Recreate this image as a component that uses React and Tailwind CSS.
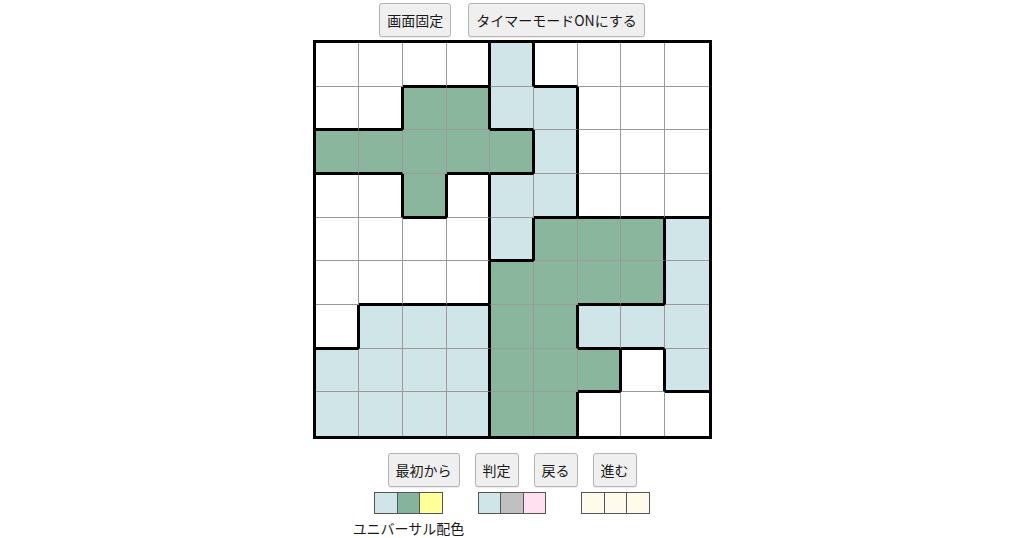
import React from "react";

const REGIONS = [
  "AAAABCCCC",
  "AAXXBBCCC",
  "XXXXXBCCC",
  "DDXDBBCCC",
  "DDDDBGGGF",
  "DDDDGGGGF",
  "DEEEGGFFF",
  "EEEEGGGHF",
  "EEEEGGHHH",
];

const COLORS = [
  "WWWWLWWWW",
  "WWGGLLWWW",
  "GGGGGLWWW",
  "WWGWLLWWW",
  "WWWWLGGGL",
  "WWWWGGGGL",
  "WLLLGGLLL",
  "LLLLGGGWL",
  "LLLLGGWWW",
];

function cellClass(r, c) {
  const reg = REGIONS[r][c];
  const col = COLORS[r][c];
  const cls = ["box-border"];
  if (col === "W") cls.push("bg-white");
  else if (col === "L") cls.push("bg-[#cfe5e8]");
  else cls.push("bg-[#8ab69e]");
  if (c < 8) {
    if (REGIONS[r][c + 1] !== reg) cls.push("border-r-2 border-r-black");
    else cls.push("border-r border-r-[#9a9a9a]");
  }
  if (c > 0 && REGIONS[r][c - 1] !== reg) cls.push("border-l border-l-black");
  if (r < 8) {
    if (REGIONS[r + 1][c] !== reg) cls.push("border-b-2 border-b-black");
    else cls.push("border-b border-b-[#9a9a9a]");
  }
  if (r > 0 && REGIONS[r - 1][c] !== reg) cls.push("border-t border-t-black");
  return cls.join(" ");
}

function Btn({ children }) {
  return (
    <button className="h-[34px] px-[7px] bg-[#efefef] border border-[#b4b4b4] rounded-[3px] text-[14px] leading-none text-[#1a1a1a] shadow-[0_1px_1px_rgba(0,0,0,0.08)]">
      {children}
    </button>
  );
}

function Swatches({ colors }) {
  return (
    <div className="flex">
      {colors.map((c, i) => (
        <div
          key={i}
          className={
            "w-[23.5px] h-[22px] border border-[#555] " + (i > 0 ? "-ml-px " : "") + c
          }
        />
      ))}
    </div>
  );
}

export default function App() {
  const cells = [];
  for (let r = 0; r < 9; r++) {
    for (let c = 0; c < 9; c++) {
      cells.push(<div key={r + "-" + c} className={cellClass(r, c)} />);
    }
  }
  return (
    <div className="w-[1024px] h-[538px] overflow-hidden bg-white flex flex-col items-center font-['Noto_Sans_CJK_JP','Noto_Sans',sans-serif]">
      <div className="flex gap-[17px] mt-[3px] shrink-0">
        <Btn>画面固定</Btn>
        <Btn>タイマーモードONにする</Btn>
      </div>
      <div className="mt-[3px] shrink-0 w-[399px] h-[399px] border-[3px] border-black box-border grid grid-cols-9 grid-rows-9">
        {cells}
      </div>
      <div className="flex gap-[15px] mt-[14px] shrink-0">
        <Btn>最初から</Btn>
        <Btn>判定</Btn>
        <Btn>戻る</Btn>
        <Btn>進む</Btn>
      </div>
      <div className="flex items-start mt-[5px] pr-[22px] shrink-0">
        <div className="flex flex-col items-center w-[112px]">
          <Swatches colors={["bg-[#cfe5e8]", "bg-[#86b39b]", "bg-[#ffff99]"]} />
          <div className="mt-[7px] text-[14px] leading-[15px] text-[#1a1a1a] whitespace-nowrap">
            ユニバーサル配色
          </div>
        </div>
        <div className="ml-[13px]">
          <Swatches colors={["bg-[#cfe5e8]", "bg-[#c0c0c0]", "bg-[#ffe0f0]"]} />
        </div>
        <div className="ml-[35px]">
          <Swatches colors={["bg-[#fffbec]", "bg-[#fffbec]", "bg-[#fffbec]"]} />
        </div>
      </div>
    </div>
  );
}
